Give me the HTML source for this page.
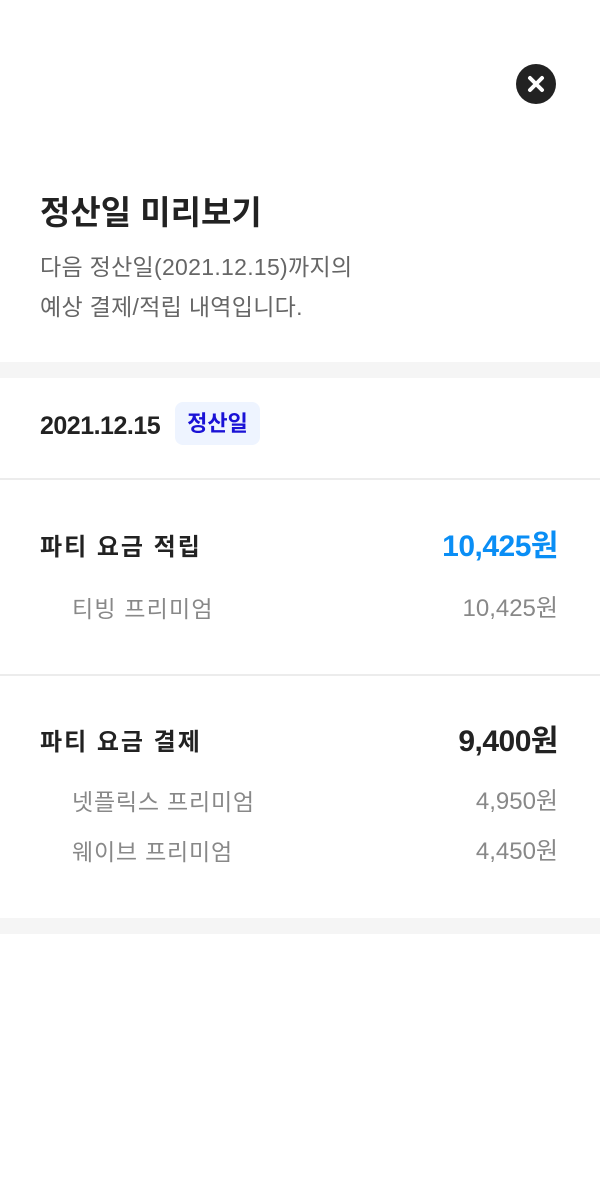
<!DOCTYPE html>
<html><head><meta charset="utf-8"><style>
*{margin:0;padding:0;box-sizing:border-box}
body{width:600px;height:1200px;background:#fff;font-family:"Liberation Sans","Noto Sans CJK KR",sans-serif;position:relative;overflow:hidden;color:#222}
.a{position:absolute;white-space:nowrap}
.band{position:absolute;left:0;width:600px;height:16px;background:#f5f5f5}
.line{position:absolute;left:0;width:600px;height:2px;background:#ececec}
.r{right:42px;text-align:right}
</style></head><body>
<svg class="a" style="left:516px;top:64px" width="40" height="40" viewBox="0 0 40 40"><circle cx="20" cy="20" r="20" fill="#222"/><path d="M14 14L26 26M26 14L14 26" stroke="#fff" stroke-width="4" stroke-linecap="round"/></svg>
<div class="a" style="left:40px;top:190px;font-size:33px;font-weight:bold;line-height:46px;letter-spacing:0px">정산일 미리보기</div>
<div class="a" style="left:40px;top:247px;font-size:23px;color:#666;line-height:40px;letter-spacing:0.3px">다음 정산일(2021.12.15)까지의<br>예상 결제/적립 내역입니다.</div>
<div class="band" style="top:362px"></div>
<div class="a" style="left:40px;top:409px;font-size:25px;font-weight:bold;line-height:34px;letter-spacing:-0.5px">2021.12.15</div>
<div class="a" style="left:175px;top:402px;width:85px;height:43px;background:#eef4ff;border-radius:8px;color:#1a12d6;font-size:22px;font-weight:bold;line-height:43px;text-align:center">정산일</div>
<div class="line" style="top:478px"></div>
<div class="a" style="left:40px;top:531px;font-size:24px;font-weight:bold;line-height:34px;letter-spacing:2px">파티 요금 적립</div>
<div class="a r" style="top:528px;font-size:30px;font-weight:bold;color:#0a8ef5;line-height:38px;letter-spacing:-0.5px">10,425원</div>
<div class="a" style="left:72px;top:593px;font-size:23px;color:#888;line-height:32px;letter-spacing:1.2px">티빙 프리미엄</div>
<div class="a r" style="top:593px;font-size:24px;color:#888;line-height:32px">10,425원</div>
<div class="line" style="top:674px"></div>
<div class="a" style="left:40px;top:726px;font-size:24px;font-weight:bold;line-height:34px;letter-spacing:2px">파티 요금 결제</div>
<div class="a r" style="top:723px;font-size:30px;font-weight:bold;line-height:38px;letter-spacing:-0.5px">9,400원</div>
<div class="a" style="left:72px;top:786px;font-size:23px;color:#888;line-height:32px;letter-spacing:0.8px">넷플릭스 프리미엄</div>
<div class="a r" style="top:786px;font-size:24px;color:#888;line-height:32px">4,950원</div>
<div class="a" style="left:72px;top:836px;font-size:23px;color:#888;line-height:32px;letter-spacing:0.8px">웨이브 프리미엄</div>
<div class="a r" style="top:836px;font-size:24px;color:#888;line-height:32px">4,450원</div>
<div class="band" style="top:918px"></div>
</body></html>
